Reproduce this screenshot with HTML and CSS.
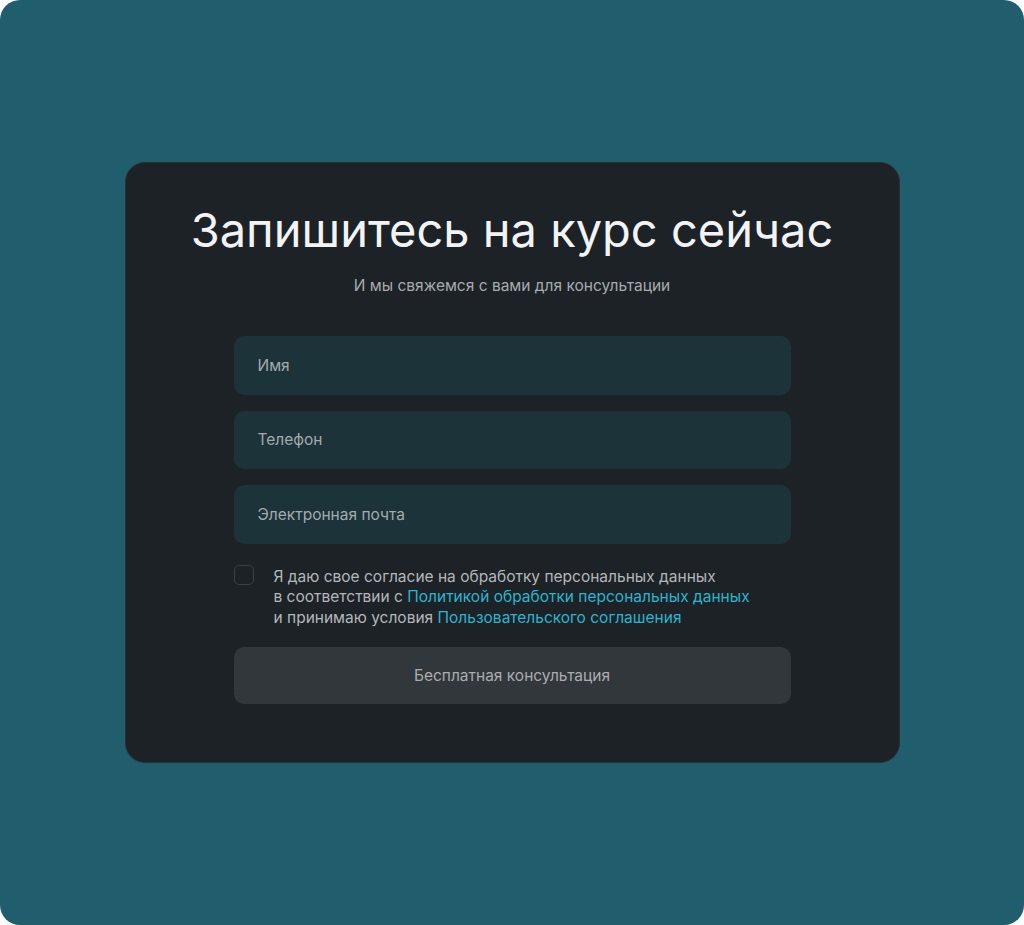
FILE: index.html
```html
<!DOCTYPE html>
<html lang="ru">
<head>
<meta charset="utf-8">
<title>Запишитесь на курс сейчас</title>
<link rel="stylesheet" href="styles.css">
</head>
<body>
<div class="frame">
  <form class="card">
    <h1 class="title">Запишитесь на курс сейчас</h1>
    <p class="subtitle">И мы свяжемся с вами для консультации</p>
    <div class="fields">
      <input class="field" type="text" placeholder="Имя">
      <input class="field" type="tel" placeholder="Телефон">
      <input class="field" type="email" placeholder="Электронная почта">
    </div>
    <label class="consent">
      <span class="box"></span>
      <span class="consent-text">Я даю свое согласие на обработку персональных данных<br>в соответствии с <a href="#" class="link">Политикой обработки персональных данных</a><br>и принимаю условия <a href="#" class="link">Пользовательского соглашения</a></span>
    </label>
    <button class="submit" type="button">Бесплатная консультация</button>
  </form>
</div>
</body>
</html>
```
FILE: styles.css
```css
* { box-sizing: border-box; }
html, body {
  margin: 0;
  padding: 0;
  background: #ffffff;
}
body {
  font-family: Inter, "Noto Sans", "DejaVu Sans", sans-serif;
}
.frame {
  width: 1024px;
  height: 925px;
  border-radius: 20px;
  background: #205e6e;
  display: flex;
  align-items: center;
  justify-content: center;
}
.card {
  width: 775px;
  height: 601px;
  background: #1d2226;
  border-radius: 20px;
  border: 1px solid #2a3034;
  padding: 38px 108px 0;
  display: flex;
  flex-direction: column;
  align-items: stretch;
}
.title {
  margin: 0 -60px;
  font-size: 47px;
  font-weight: 400;
  line-height: 58px;
  color: #f2f3f4;
  text-align: center;
  white-space: nowrap;
}
.subtitle {
  margin: 16px 0 0;
  font-size: 15.5px;
  line-height: 21px;
  color: #a6abae;
  text-align: center;
}
.fields {
  margin-top: 40px;
  display: flex;
  flex-direction: column;
  gap: 16px;
}
.field {
  height: 58.5px;
  border: none;
  border-radius: 10px;
  background: #1c333a;
  padding: 0 24px;
  font-family: inherit;
  font-size: 15.5px;
  color: #d0d4d6;
  outline: none;
}
.field::placeholder {
  color: #a3abae;
}
.consent {
  margin-top: 21px;
  display: flex;
  gap: 20px;
  align-items: flex-start;
}
.box {
  flex: none;
  width: 20px;
  height: 20px;
  border: 1px solid #394146;
  border-radius: 5px;
}
.consent-text {
  font-size: 15.5px;
  line-height: 20.5px;
  color: #b3b7ba;
  margin-top: 2px;
}
.link {
  color: #2bb5cf;
  text-decoration: none;
}
.submit {
  margin-top: 19px;
  height: 56.5px;
  border: none;
  border-radius: 10px;
  background: #32373b;
  color: #a9adb0;
  font-family: inherit;
  font-size: 15.5px;
}
```
